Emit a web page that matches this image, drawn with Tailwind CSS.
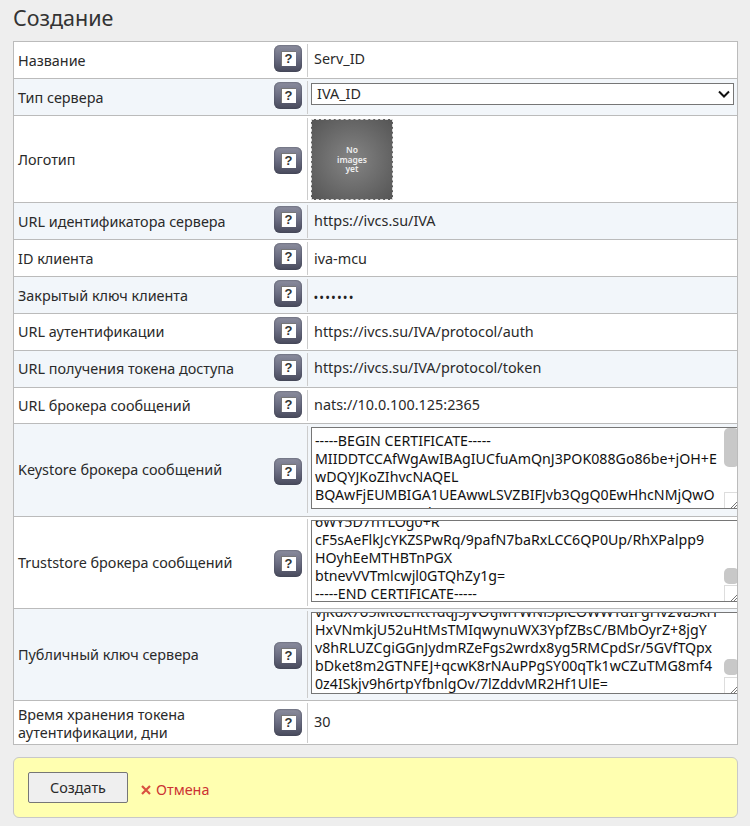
<!DOCTYPE html>
<html lang="ru"><head><meta charset="utf-8">
<script src="https://cdn.jsdelivr.net/npm/@tailwindcss/browser@4"></script>
</head>
<body class="bg-[#eeeeee] w-[750px] h-[826px] overflow-hidden font-['Noto_Sans',sans-serif] text-[14.4px] text-[#2a2a2a]">
<h1 class="pl-[13px] h-[41px] pt-[3px] text-[21.5px] leading-[29px] text-[#333]">Создание</h1>
<div class="ml-[13px] w-[725px] border border-[#bbbbbb] border-b-0 bg-white overflow-hidden">

<div class="flex h-[37px] border-b border-[#bbbbbb] pt-[2px]"><div class="w-[256px] shrink-0 pl-[4px] pt-[5px] leading-[24px]">Название</div><div class="w-[37px] shrink-0 pt-[1px]"><div class="ml-[4px] w-[28px] h-[27px] rounded-[6px] bg-gradient-to-b from-[#8c8e9e] via-[#6b6d82] to-[#484a5c] shadow-[inset_0_0_2px_#3f4050] flex items-center justify-center"><div class="w-[15px] h-[15px] bg-white border-t border-l border-[#777] text-[#333] font-['Liberation_Sans'] text-[13px] leading-[14px] font-bold text-center">?</div></div></div><div class="border-l border-[#cccccc] pl-[6px] leading-[24px] pt-[3px] h-[33px]">Serv_ID</div></div>

<div class="flex h-[37px] border-b border-[#bbbbbb] bg-[#f2f6fa] pt-[2px]"><div class="w-[256px] shrink-0 pl-[4px] pt-[5px] leading-[24px]">Тип сервера</div><div class="w-[37px] shrink-0 pt-[1px]"><div class="ml-[4px] w-[28px] h-[27px] rounded-[6px] bg-gradient-to-b from-[#8c8e9e] via-[#6b6d82] to-[#484a5c] shadow-[inset_0_0_2px_#3f4050] flex items-center justify-center"><div class="w-[15px] h-[15px] bg-white border-t border-l border-[#777] text-[#333] font-['Liberation_Sans'] text-[13px] leading-[14px] font-bold text-center">?</div></div></div><div class="border-l border-[#cccccc] pl-[3px] h-[33px]"><div class="mt-[2px] w-[423px] h-[22px] bg-white border border-[#767676] flex items-center justify-between pl-[5px] pr-[3px] leading-[20px]"><span>IVA_ID</span><svg width="12" height="8" viewBox="0 0 12 8" fill="none" stroke="#111" stroke-width="2"><path d="M1 1.5l5 5 5-5"/></svg></div></div></div>

<div class="flex h-[87px] border-b border-[#bbbbbb] pt-[2px]"><div class="w-[256px] shrink-0 pl-[4px] pb-[1px] flex items-center leading-[24px]">Логотип</div><div class="w-[37px] shrink-0 flex items-center"><div class="ml-[4px] w-[28px] h-[27px] rounded-[6px] bg-gradient-to-b from-[#8c8e9e] via-[#6b6d82] to-[#484a5c] shadow-[inset_0_0_2px_#3f4050] flex items-center justify-center"><div class="w-[15px] h-[15px] bg-white border-t border-l border-[#777] text-[#333] font-['Liberation_Sans'] text-[13px] leading-[14px] font-bold text-center">?</div></div></div><div class="border-l border-[#cccccc] pl-[3px] h-[82px]"><div class="mt-[1px] w-[82px] h-[81px] border border-dashed border-[#dddddd] bg-[radial-gradient(circle,#858585_0%,#555555_100%)] flex items-center justify-center text-center text-[#eee] text-[8.5px] leading-[9.5px] font-semibold">No<br>images<br>yet</div></div></div>

<div class="flex h-[37px] border-b border-[#bbbbbb] bg-[#f2f6fa] pt-[2px]"><div class="w-[256px] shrink-0 pl-[4px] pt-[5px] leading-[24px]">URL идентификатора сервера</div><div class="w-[37px] shrink-0 pt-[1px]"><div class="ml-[4px] w-[28px] h-[27px] rounded-[6px] bg-gradient-to-b from-[#8c8e9e] via-[#6b6d82] to-[#484a5c] shadow-[inset_0_0_2px_#3f4050] flex items-center justify-center"><div class="w-[15px] h-[15px] bg-white border-t border-l border-[#777] text-[#333] font-['Liberation_Sans'] text-[13px] leading-[14px] font-bold text-center">?</div></div></div><div class="border-l border-[#cccccc] pl-[6px] leading-[24px] pt-[4px] h-[33px]">https://ivcs.su/IVA</div></div>

<div class="flex h-[37px] border-b border-[#bbbbbb] pt-[2px]"><div class="w-[256px] shrink-0 pl-[4px] pt-[5px] leading-[24px]">ID клиента</div><div class="w-[37px] shrink-0 pt-[1px]"><div class="ml-[4px] w-[28px] h-[27px] rounded-[6px] bg-gradient-to-b from-[#8c8e9e] via-[#6b6d82] to-[#484a5c] shadow-[inset_0_0_2px_#3f4050] flex items-center justify-center"><div class="w-[15px] h-[15px] bg-white border-t border-l border-[#777] text-[#333] font-['Liberation_Sans'] text-[13px] leading-[14px] font-bold text-center">?</div></div></div><div class="border-l border-[#cccccc] pl-[6px] leading-[24px] pt-[5px] h-[33px]">iva-mcu</div></div>

<div class="flex h-[37px] border-b border-[#bbbbbb] bg-[#f2f6fa] pt-[2px]"><div class="w-[256px] shrink-0 pl-[4px] pt-[5px] leading-[24px]">Закрытый ключ клиента</div><div class="w-[37px] shrink-0 pt-[1px]"><div class="ml-[4px] w-[28px] h-[27px] rounded-[6px] bg-gradient-to-b from-[#8c8e9e] via-[#6b6d82] to-[#484a5c] shadow-[inset_0_0_2px_#3f4050] flex items-center justify-center"><div class="w-[15px] h-[15px] bg-white border-t border-l border-[#777] text-[#333] font-['Liberation_Sans'] text-[13px] leading-[14px] font-bold text-center">?</div></div></div><div class="border-l border-[#cccccc] pl-[6px] leading-[24px] pt-[6px] h-[33px] text-[10px] font-bold tracking-[2.1px] text-[#222]">•••••••</div></div>

<div class="flex h-[37px] border-b border-[#bbbbbb] pt-[2px]"><div class="w-[256px] shrink-0 pl-[4px] pt-[4px] leading-[24px]">URL аутентификации</div><div class="w-[37px] shrink-0 pt-[1px]"><div class="ml-[4px] w-[28px] h-[27px] rounded-[6px] bg-gradient-to-b from-[#8c8e9e] via-[#6b6d82] to-[#484a5c] shadow-[inset_0_0_2px_#3f4050] flex items-center justify-center"><div class="w-[15px] h-[15px] bg-white border-t border-l border-[#777] text-[#333] font-['Liberation_Sans'] text-[13px] leading-[14px] font-bold text-center">?</div></div></div><div class="border-l border-[#cccccc] pl-[6px] leading-[24px] pt-[4px] h-[33px]">https://ivcs.su/IVA/protocol/auth</div></div>

<div class="flex h-[37px] border-b border-[#bbbbbb] bg-[#f2f6fa] pt-[2px]"><div class="w-[256px] shrink-0 pl-[4px] pt-[4px] leading-[24px]">URL получения токена доступа</div><div class="w-[37px] shrink-0 pt-[1px]"><div class="ml-[4px] w-[28px] h-[27px] rounded-[6px] bg-gradient-to-b from-[#8c8e9e] via-[#6b6d82] to-[#484a5c] shadow-[inset_0_0_2px_#3f4050] flex items-center justify-center"><div class="w-[15px] h-[15px] bg-white border-t border-l border-[#777] text-[#333] font-['Liberation_Sans'] text-[13px] leading-[14px] font-bold text-center">?</div></div></div><div class="border-l border-[#cccccc] pl-[6px] leading-[24px] pt-[3px] h-[33px]">https://ivcs.su/IVA/protocol/token</div></div>

<div class="flex h-[36px] border-b border-[#bbbbbb] pt-[2px]"><div class="w-[256px] shrink-0 pl-[4px] pt-[4px] leading-[24px]">URL брокера сообщений</div><div class="w-[37px] shrink-0 pt-[1px]"><div class="ml-[4px] w-[28px] h-[27px] rounded-[6px] bg-gradient-to-b from-[#8c8e9e] via-[#6b6d82] to-[#484a5c] shadow-[inset_0_0_2px_#3f4050] flex items-center justify-center"><div class="w-[15px] h-[15px] bg-white border-t border-l border-[#777] text-[#333] font-['Liberation_Sans'] text-[13px] leading-[14px] font-bold text-center">?</div></div></div><div class="border-l border-[#cccccc] pl-[6px] leading-[24px] pt-[3px] h-[31px]">nats://10.0.100.125:2365</div></div>

<div class="flex h-[93px] border-b border-[#bbbbbb] bg-[#f2f6fa] pt-[2px]"><div class="w-[256px] shrink-0 pl-[4px] pb-[2px] flex items-center leading-[24px]">Keystore брокера сообщений</div><div class="w-[37px] shrink-0 flex items-center"><div class="ml-[4px] w-[28px] h-[27px] rounded-[6px] bg-gradient-to-b from-[#8c8e9e] via-[#6b6d82] to-[#484a5c] shadow-[inset_0_0_2px_#3f4050] flex items-center justify-center"><div class="w-[15px] h-[15px] bg-white border-t border-l border-[#777] text-[#333] font-['Liberation_Sans'] text-[13px] leading-[14px] font-bold text-center">?</div></div></div><div class="border-l border-[#cccccc] pl-[3px] h-[87px] shrink-0">
<div class="relative mt-[1px] w-[440px] h-[82px] bg-white border border-[#767676] overflow-hidden text-[#111] text-[14.2px] leading-[18px] pl-[3px] pt-[4px] whitespace-pre"><div>-----BEGIN CERTIFICATE-----
MIIDDTCCAfWgAwIBAgIUCfuAmQnJ3POK088Go86be+jOH+E
wDQYJKoZIhvcNAQEL
BQAwFjEUMBIGA1UEAwwLSVZBIFJvb3QgQ0EwHhcNMjQwO
TA+MTEXMTIWWhcNMzQ</div><div class="absolute left-[412px] top-0 w-[15px] h-[39px] rounded-[5px] bg-[#c8c8c8]"></div><div class="absolute left-[412px] bottom-0 w-[15px] h-[16px] bg-white border-l border-t border-[#dddddd]"><svg class="absolute right-[2px] bottom-0" width="6" height="6" viewBox="0 0 6 6" stroke="#777"><path d="M0 6l6-6M3 6l3-3"/></svg></div></div></div></div>

<div class="flex h-[92px] border-b border-[#bbbbbb] pt-[2px]"><div class="w-[256px] shrink-0 pl-[4px] pb-[2px] flex items-center leading-[24px]">Truststore брокера сообщений</div><div class="w-[37px] shrink-0 flex items-center"><div class="ml-[4px] w-[28px] h-[27px] rounded-[6px] bg-gradient-to-b from-[#8c8e9e] via-[#6b6d82] to-[#484a5c] shadow-[inset_0_0_2px_#3f4050] flex items-center justify-center"><div class="w-[15px] h-[15px] bg-white border-t border-l border-[#777] text-[#333] font-['Liberation_Sans'] text-[13px] leading-[14px] font-bold text-center">?</div></div></div><div class="border-l border-[#cccccc] pl-[3px] h-[87px] shrink-0">
<div class="relative mt-[1px] w-[440px] h-[82px] bg-white border border-[#767676] overflow-hidden text-[#111] text-[14.2px] leading-[18px] pl-[3px] whitespace-pre"><div class="-mt-[8px]">6WY5D7hTLOg0+R
cF5sAeFlkJcYKZSPwRq/9pafN7baRxLCC6QP0Up/RhXPalpp9
HOyhEeMTHBTnPGX
btnevVVTmlcwjl0GTQhZy1g=
-----END CERTIFICATE-----</div><div class="absolute left-[412px] top-[47px] w-[15px] h-[16px] rounded-[5px] bg-[#c8c8c8]"></div><div class="absolute left-[412px] bottom-0 w-[15px] h-[16px] bg-white border-l border-t border-[#dddddd]"><svg class="absolute right-[2px] bottom-0" width="6" height="6" viewBox="0 0 6 6" stroke="#777"><path d="M0 6l6-6M3 6l3-3"/></svg></div></div></div></div>

<div class="flex h-[92px] border-b border-[#bbbbbb] bg-[#f2f6fa] pt-[2px]"><div class="w-[256px] shrink-0 pl-[4px] pb-[1px] flex items-center leading-[24px]">Публичный ключ сервера</div><div class="w-[37px] shrink-0 flex items-center"><div class="ml-[4px] w-[28px] h-[27px] rounded-[6px] bg-gradient-to-b from-[#8c8e9e] via-[#6b6d82] to-[#484a5c] shadow-[inset_0_0_2px_#3f4050] flex items-center justify-center"><div class="w-[15px] h-[15px] bg-white border-t border-l border-[#777] text-[#333] font-['Liberation_Sans'] text-[13px] leading-[14px] font-bold text-center">?</div></div></div><div class="border-l border-[#cccccc] pl-[3px] h-[87px] shrink-0">
<div class="relative mt-[1px] w-[440px] h-[82px] bg-white border border-[#767676] overflow-hidden text-[#111] text-[14.2px] leading-[18px] pl-[3px] whitespace-pre"><div class="-mt-[10px]">vjKdX7o5MtoEnttTdqj5JVOtJMTWNl5piCOWWTdIFgHv2va3kH
HxVNmkjU52uHtMsTMIqwynuWX3YpfZBsC/BMbOyrZ+8jgY
v8hRLUZCgiGGnJydmRZeFgs2wrdx8yg5RMCpdSr/5GVfTQpx
bDket8m2GTNFEJ+qcwK8rNAuPPgSY00qTk1wCZuTMG8mf4
0z4ISkjv9h6rtpYfbnlgOv/7lZddvMR2Hf1UlE=</div><div class="absolute left-[412px] top-[46px] w-[15px] h-[16px] rounded-[5px] bg-[#c8c8c8]"></div><div class="absolute left-[412px] bottom-0 w-[15px] h-[16px] bg-white border-l border-t border-[#dddddd]"><svg class="absolute right-[2px] bottom-0" width="6" height="6" viewBox="0 0 6 6" stroke="#777"><path d="M0 6l6-6M3 6l3-3"/></svg></div></div></div></div>

<div class="flex h-[44px] border-b border-[#bbbbbb] pt-[2px]"><div class="w-[256px] shrink-0 pl-[4px] leading-[18px] pt-[3px]">Время хранения токена аутентификации, дни</div><div class="w-[37px] shrink-0 flex items-center pb-[2px]"><div class="ml-[4px] w-[28px] h-[27px] rounded-[6px] bg-gradient-to-b from-[#8c8e9e] via-[#6b6d82] to-[#484a5c] shadow-[inset_0_0_2px_#3f4050] flex items-center justify-center"><div class="w-[15px] h-[15px] bg-white border-t border-l border-[#777] text-[#333] font-['Liberation_Sans'] text-[13px] leading-[14px] font-bold text-center">?</div></div></div><div class="border-l border-[#cccccc] pl-[6px] h-[40px] flex items-center pb-[3px]">30</div></div>
</div>

<div class="mt-[12px] ml-[13px] w-[725px] h-[61px] rounded-[6px] border border-[#c8c8c8] bg-[#ffffb0] flex items-center pl-[14px]">
<div class="w-[100px] h-[31px] rounded-[2px] border border-[#767676] bg-[#efefef] flex items-center justify-center">Создать</div>
<div class="ml-[13px] mt-[5px] flex items-center gap-[5px] text-[#cc3333]"><svg width="10" height="10" viewBox="0 0 10 10" stroke="#d9503f" stroke-width="2.2"><path d="M1 1l8 8M9 1l-8 8"/></svg>Отмена</div>
</div>
</body></html>
